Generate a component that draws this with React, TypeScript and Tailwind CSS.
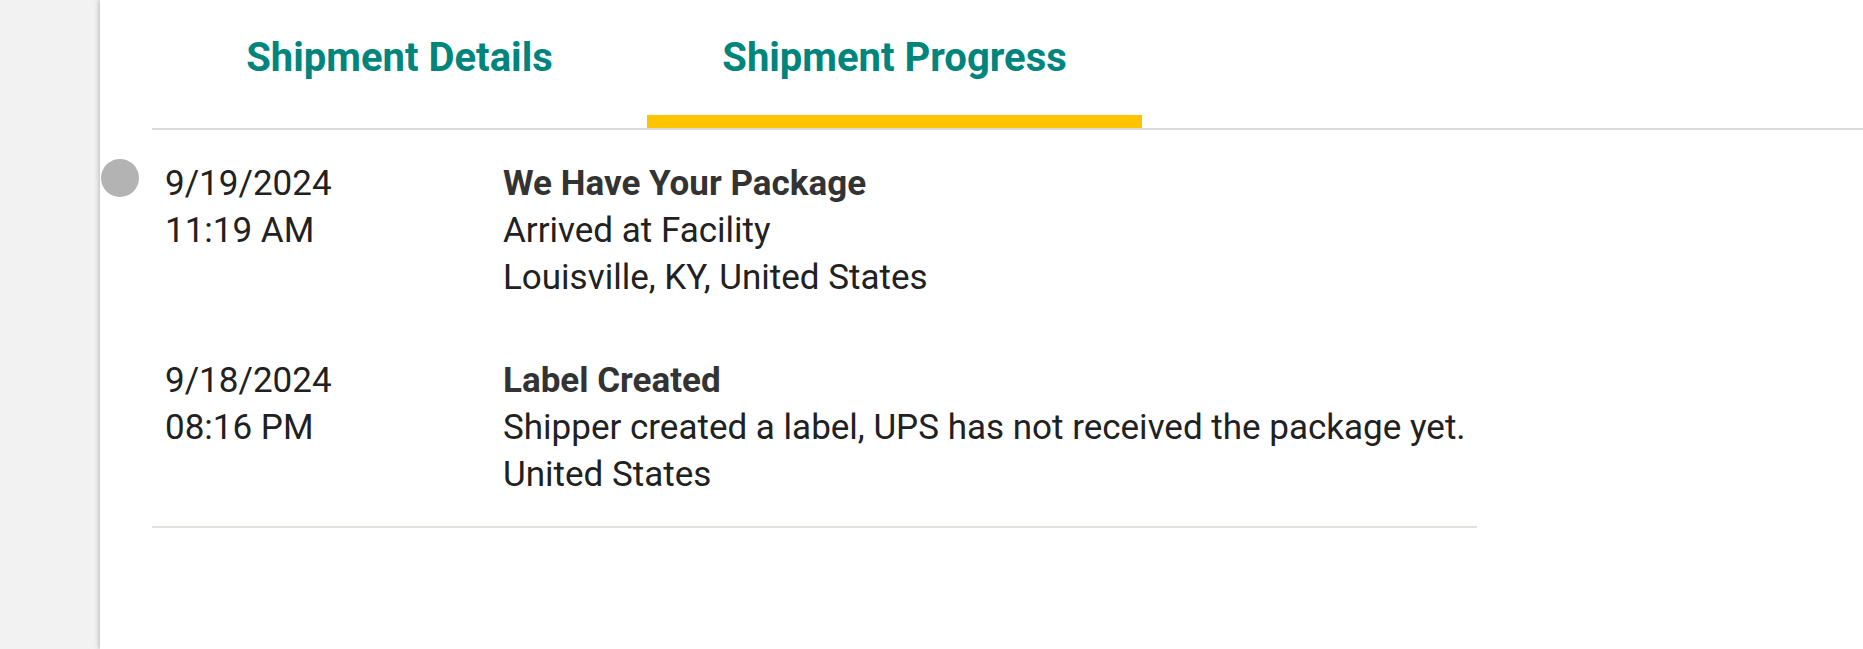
import React from 'react';

type Event = {
  date: string;
  time: string;
  title: string;
  lines: string[];
  current?: boolean;
};

const events: Event[] = [
  {
    date: '9/19/2024',
    time: '11:19 AM',
    title: 'We Have Your Package',
    lines: ['Arrived at Facility', 'Louisville, KY, United States'],
    current: true,
  },
  {
    date: '9/18/2024',
    time: '08:16 PM',
    title: 'Label Created',
    lines: ['Shipper created a label, UPS has not received the package yet.', 'United States'],
  },
];

const tabs = ['Shipment Details', 'Shipment Progress'];

export default function App() {
  const active = 1;

  return (
    <div className="flex h-[649px] w-full overflow-hidden bg-[#f2f2f2] font-['Roboto',sans-serif]">
      <div className="w-[100px] shrink-0" />
      <div className="relative flex-1 bg-white shadow-[-2px_0_4px_rgba(0,0,0,0.18)]">
        {/* tabs */}
        <div className="flex pl-[52px]">
          {tabs.map((t, i) => (
            <div key={t} className="flex w-[495px] flex-col">
              <div className="flex h-[115px] items-center justify-center text-[40px] font-bold leading-[48px] text-[#00857d]">
                {t}
              </div>
              <div className={i === active ? 'h-[13px] bg-[#ffc400]' : 'h-[13px]'} />
            </div>
          ))}
        </div>
        <div className="ml-[52px] h-[2px] bg-[#d9d9d9]" />

        {/* progress list */}
        <div className="ml-[52px] w-[1325px] pt-[2px]">
          {events.map((e) => (
            <div key={e.date + e.time} className="relative flex py-[28px] pl-[13px] text-[35px] leading-[47px] text-[#212121]">
              {e.current && (
                <span className="absolute left-[-51px] top-[27px] h-[38px] w-[38px] rounded-full bg-[#b3b3b3]" />
              )}
              <div className="w-[338px] shrink-0">
                <div>{e.date}</div>
                <div>{e.time}</div>
              </div>
              <div>
                <div className="font-bold text-[#333333]">{e.title}</div>
                {e.lines.map((l) => (
                  <div key={l}>{l}</div>
                ))}
              </div>
            </div>
          ))}
          <div className="h-[2px] bg-[#e3e1de]" />
        </div>
      </div>
    </div>
  );
}
